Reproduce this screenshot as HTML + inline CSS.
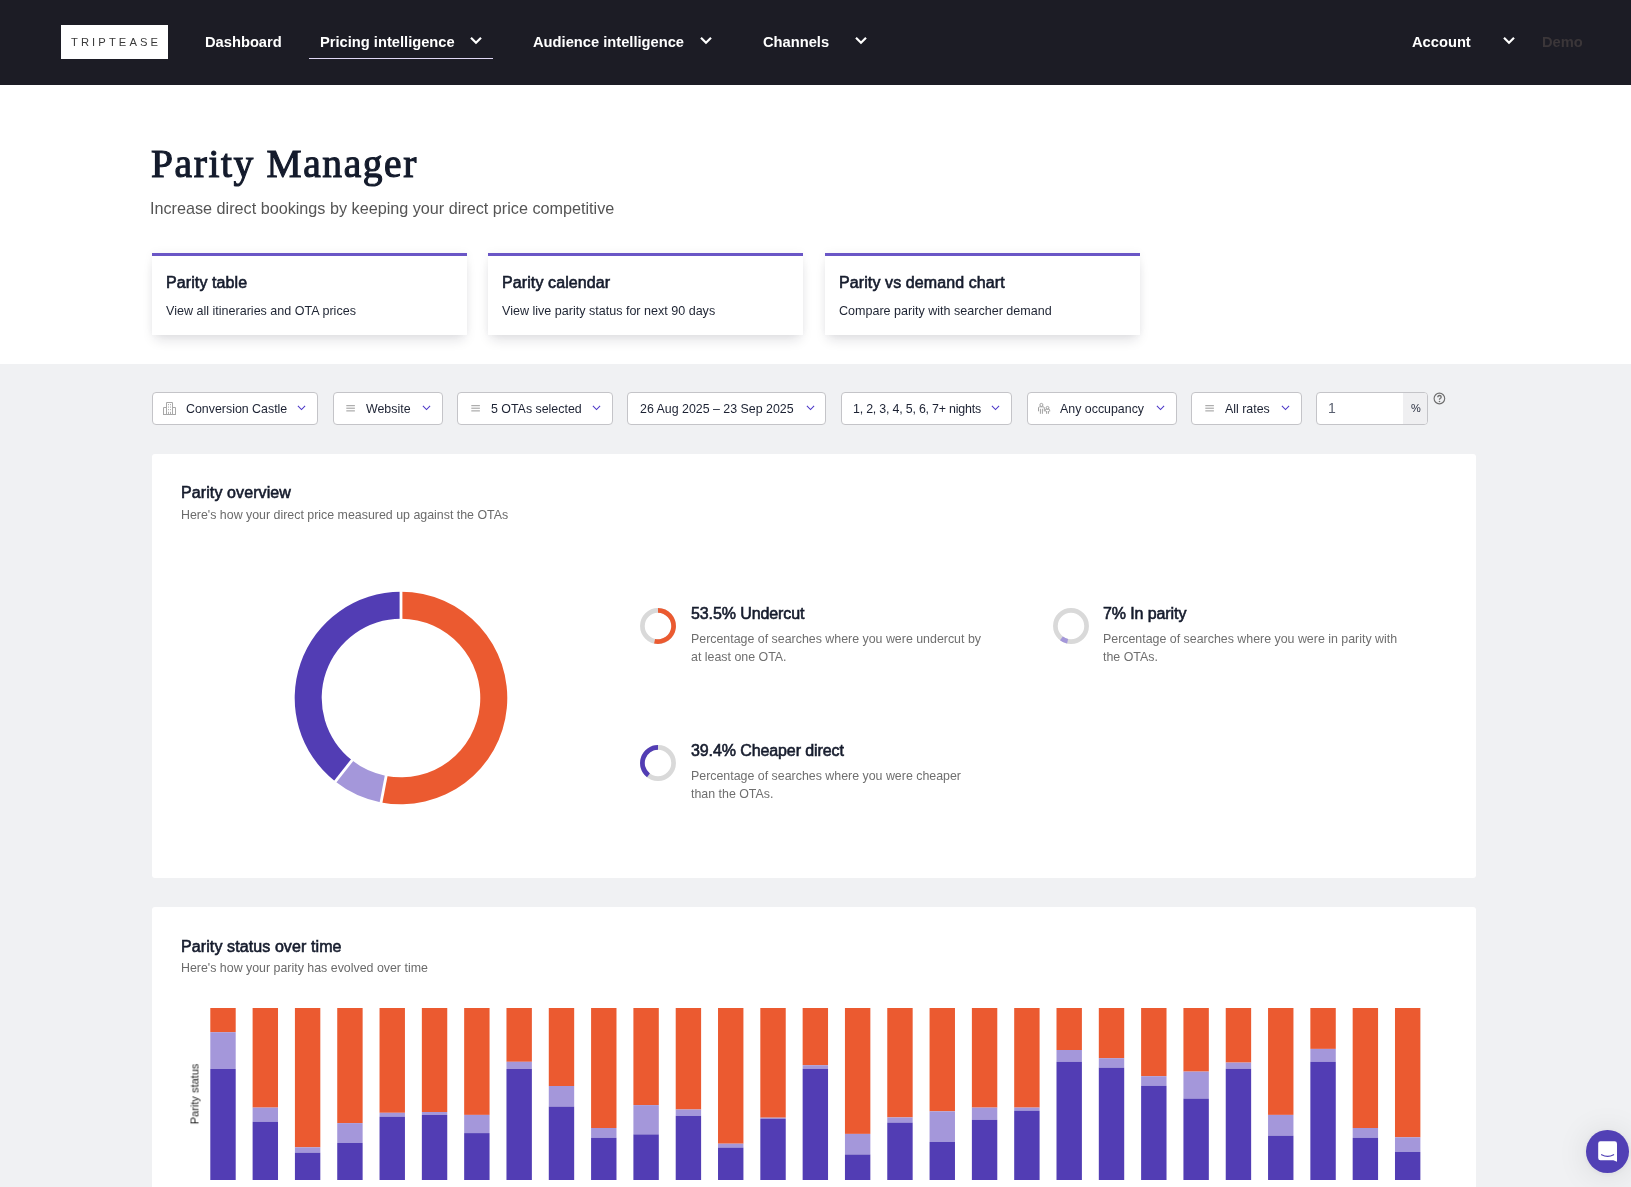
<!DOCTYPE html>
<html><head><meta charset="utf-8">
<style>
*{box-sizing:border-box;margin:0;padding:0}
html,body{width:1631px;height:1187px;overflow:hidden;background:#f0f1f3;font-family:"Liberation Sans",sans-serif;color:#161c2d}
.a{position:absolute;white-space:nowrap}
#nav{position:absolute;left:0;top:0;width:1631px;height:85px;background:#1c1c25}
.nv{position:absolute;top:34.5px;font-size:14.7px;line-height:14.7px;font-weight:700;color:#fff}
.chev{position:absolute;top:37px;width:12px;height:9px}
#hdr{position:absolute;left:0;top:85px;width:1631px;height:279px;background:#fff}
.hc{position:absolute;top:253px;width:315px;height:82px;background:#fff;border-top:3px solid #6a56c6;box-shadow:0 7px 12px -3px rgba(20,20,40,0.14),0 0 9px rgba(20,20,40,0.05)}
.hct{position:absolute;left:14px;top:19.3px;font-size:16px;line-height:16px;letter-spacing:0.1px;font-weight:400;-webkit-text-stroke:0.6px #161c2d;color:#161c2d;white-space:nowrap}
.hcd{position:absolute;left:14px;top:49.2px;font-size:12.55px;line-height:12.55px;color:#1e2433;white-space:nowrap}
.flt{position:absolute;top:392px;height:33px;background:#fff;border:1px solid #c4c4c8;border-radius:4px}
.ft{position:absolute;top:403.1px;font-size:12.4px;line-height:12.4px;color:#1c2233;white-space:nowrap}
.card{position:absolute;left:152px;width:1324px;background:#fff;border-radius:3px}
.ct{position:absolute;font-size:16px;line-height:16px;letter-spacing:0.1px;font-weight:400;-webkit-text-stroke:0.6px #161c2d;color:#161c2d;white-space:nowrap}
.cs{position:absolute;font-size:12.4px;line-height:12.4px;color:#6b6b6b;white-space:nowrap}
.st{position:absolute;font-size:16px;line-height:16px;letter-spacing:-0.1px;font-weight:400;-webkit-text-stroke:0.6px #161c2d;color:#161c2d;white-space:nowrap}
.sd{position:absolute;font-size:12.4px;line-height:18px;color:#6f6f6f;white-space:nowrap}
.a,.nv,.ft,.ct,.cs,.st,.sd,.hc{will-change:transform}
</style></head><body>
<div id="nav">
  <div class="a" style="left:61px;top:25px;width:107px;height:34px;background:#fff"></div>
  <div class="a" style="left:70.9px;top:36.5px;font-size:11.2px;line-height:11.2px;letter-spacing:3.1px;color:#3a3a3a">TRIPTEASE</div>
  <div class="nv" style="left:204.5px">Dashboard</div>
  <div class="nv" style="left:320.4px">Pricing intelligence</div>
  <svg class="chev" style="left:469.8px;top:36px" viewBox="0 0 12 9"><path d="M1 1.7 L6 6.7 L11 1.7" fill="none" stroke="#fff" stroke-width="2.2"/></svg>
  <div class="a" style="left:309px;top:58px;width:184px;height:1px;background:#e0d8f5"></div>
  <div class="nv" style="left:532.8px">Audience intelligence</div>
  <svg class="chev" style="left:699.8px;top:36px" viewBox="0 0 12 9"><path d="M1 1.7 L6 6.7 L11 1.7" fill="none" stroke="#fff" stroke-width="2.2"/></svg>
  <div class="nv" style="left:763.3px">Channels</div>
  <svg class="chev" style="left:854.8px;top:36px" viewBox="0 0 12 9"><path d="M1 1.7 L6 6.7 L11 1.7" fill="none" stroke="#fff" stroke-width="2.2"/></svg>
  <div class="nv" style="left:1412px">Account</div>
  <svg class="chev" style="left:1502.8px;top:36px" viewBox="0 0 12 9"><path d="M1 1.7 L6 6.7 L11 1.7" fill="none" stroke="#fff" stroke-width="2.2"/></svg>
  <div class="nv" style="left:1541.6px;color:#3b3639">Demo</div>
</div>
<div id="hdr"></div>
<div class="a" style="left:150.5px;top:144.6px;font-family:'Liberation Serif',serif;font-size:39.5px;line-height:39.5px;font-weight:400;-webkit-text-stroke:1.1px #141b2c;letter-spacing:1.6px;color:#141b2c">Parity Manager</div>
<div class="a" style="left:150px;top:199.8px;font-size:16.2px;line-height:16.2px;color:#555">Increase direct bookings by keeping your direct price competitive</div>

<div class="hc" style="left:152px"><div class="hct">Parity table</div><div class="hcd">View all itineraries and OTA prices</div></div>
<div class="hc" style="left:488px"><div class="hct">Parity calendar</div><div class="hcd">View live parity status for next 90 days</div></div>
<div class="hc" style="left:825px"><div class="hct">Parity vs demand chart</div><div class="hcd">Compare parity with searcher demand</div></div>

<!-- FILTERS -->
<div class="flt" style="left:152px;width:166px"></div>
<svg class="a" style="left:163px;top:402px" width="13" height="13" viewBox="0 0 13 13"><g fill="none" stroke="#a8a8a8" stroke-width="1"><path d="M3.5 12.5V0.5h6v12M0.5 12.5V5.5h3M9.5 5.5h3v7M0 12.5h13"/><path d="M5.5 2v1.2M7.5 2v1.2M5.5 4.5v1.2M7.5 4.5v1.2M5.5 7v1.2M7.5 7v1.2M5.5 9.8v2.7M7.5 9.8v2.7" stroke-width="0.9"/></g></svg>
<div class="ft" style="left:185.5px">Conversion Castle</div>
<svg class="a" style="left:297px;top:405px" width="9" height="6" viewBox="0 0 9 6"><path d="M0.9 0.9 L4.5 4.5 L8.1 0.9" fill="none" stroke="#4a36c8" stroke-width="1.05"/></svg>

<div class="flt" style="left:333px;width:110px"></div>
<svg class="a" style="left:345.8px;top:404px" width="10" height="8" viewBox="0 0 10 8"><path d="M0.3 1.7h8.6M0.3 4.2h8.6M0.3 6.9h8.6" fill="none" stroke="#9a9a9a" stroke-width="1"/></svg>
<div class="ft" style="left:366px">Website</div>
<svg class="a" style="left:422.3px;top:405px" width="9" height="6" viewBox="0 0 9 6"><path d="M0.9 0.9 L4.5 4.5 L8.1 0.9" fill="none" stroke="#4a36c8" stroke-width="1.05"/></svg>

<div class="flt" style="left:457px;width:155.5px"></div>
<svg class="a" style="left:470.8px;top:404px" width="10" height="8" viewBox="0 0 10 8"><path d="M0.3 1.7h8.6M0.3 4.2h8.6M0.3 6.9h8.6" fill="none" stroke="#9a9a9a" stroke-width="1"/></svg>
<div class="ft" style="left:491.1px">5 OTAs selected</div>
<svg class="a" style="left:592px;top:405px" width="9" height="6" viewBox="0 0 9 6"><path d="M0.9 0.9 L4.5 4.5 L8.1 0.9" fill="none" stroke="#4a36c8" stroke-width="1.05"/></svg>

<div class="flt" style="left:627px;width:198.6px"></div>
<div class="ft" style="left:639.6px">26 Aug 2025 – 23 Sep 2025</div>
<svg class="a" style="left:806px;top:405px" width="9" height="6" viewBox="0 0 9 6"><path d="M0.9 0.9 L4.5 4.5 L8.1 0.9" fill="none" stroke="#4a36c8" stroke-width="1.05"/></svg>

<div class="flt" style="left:841.3px;width:170.5px"></div>
<div class="ft" style="left:852.9px;letter-spacing:-0.2px">1, 2, 3, 4, 5, 6, 7+ nights</div>
<svg class="a" style="left:990.8px;top:405px" width="9" height="6" viewBox="0 0 9 6"><path d="M0.9 0.9 L4.5 4.5 L8.1 0.9" fill="none" stroke="#4a36c8" stroke-width="1.05"/></svg>

<div class="flt" style="left:1027.4px;width:149.3px"></div>
<svg class="a" style="left:1037px;top:402px" width="15" height="13" viewBox="0 0 15 13"><g fill="none" stroke="#a0a0a0" stroke-width="1"><circle cx="4.4" cy="2.9" r="1.5"/><path d="M1.5 9.3V5.9q0-1.1 1.1-1.1h3.6q1.1 0 1.1 1.1V9.3M3.4 6.8v5M5.4 6.8v5"/><circle cx="10.5" cy="5.8" r="1.4"/><path d="M8.3 9.5v-1.4q0-.9.9-.9h2.6q.9 0 .9.9v1.4M9.6 9v2.8M11.4 9v2.8"/></g></svg>
<div class="ft" style="left:1060.2px">Any occupancy</div>
<svg class="a" style="left:1156px;top:405px" width="9" height="6" viewBox="0 0 9 6"><path d="M0.9 0.9 L4.5 4.5 L8.1 0.9" fill="none" stroke="#4a36c8" stroke-width="1.05"/></svg>

<div class="flt" style="left:1191.3px;width:110.4px"></div>
<svg class="a" style="left:1205.2px;top:404px" width="10" height="8" viewBox="0 0 10 8"><path d="M0.3 1.7h8.6M0.3 4.2h8.6M0.3 6.9h8.6" fill="none" stroke="#9a9a9a" stroke-width="1"/></svg>
<div class="ft" style="left:1224.7px">All rates</div>
<svg class="a" style="left:1281.3px;top:405px" width="9" height="6" viewBox="0 0 9 6"><path d="M0.9 0.9 L4.5 4.5 L8.1 0.9" fill="none" stroke="#4a36c8" stroke-width="1.05"/></svg>

<div class="flt" style="left:1316.3px;width:112.2px;overflow:hidden"><div style="position:absolute;left:86px;top:0;width:25px;height:31px;background:#efeff1"></div></div>
<div class="ft" style="left:1328.3px;top:401.3px;color:#5a6070;font-size:14px;line-height:14px">1</div>
<div class="ft" style="left:1411px;font-size:11px;line-height:11px;top:403.2px;color:#2a3040">%</div>
<svg class="a" style="left:1433px;top:392px" width="13" height="13" viewBox="0 0 13 13"><circle cx="6.4" cy="6.5" r="5.3" fill="none" stroke="#6f6f6f" stroke-width="1.15"/><path d="M4.8 5.3q0-1.8 1.7-1.8t1.7 1.6q0 1-1.1 1.4-.6.3-.6 1v.3" fill="none" stroke="#6f6f6f" stroke-width="1.3"/><circle cx="6.5" cy="9.5" r=".8" fill="#6f6f6f"/></svg>

<!-- CARD 1 -->
<div class="card" style="top:454px;height:424px"></div>
<div class="ct" style="left:180.8px;top:485.2px">Parity overview</div>
<div class="cs" style="left:180.8px;top:509.2px">Here's how your direct price measured up against the OTAs</div>
<svg class="a" style="left:294px;top:591px" width="214" height="214" viewBox="0 0 214 214"><path d="M107.00 0.70A106.3 106.3 0 1 1 87.08 211.42L92.14 184.90A79.3 79.3 0 1 0 107.00 27.70Z" fill="#eb5a30"/><path d="M87.08 211.42A106.3 106.3 0 0 1 41.26 190.54L57.96 169.32A79.3 79.3 0 0 0 92.14 184.90Z" fill="#a497da"/><path d="M41.26 190.54A106.3 106.3 0 0 1 107.00 0.70L107.00 27.70A79.3 79.3 0 0 0 57.96 169.32Z" fill="#523db4"/><line x1="107.00" y1="29.00" x2="107.00" y2="-1.00" stroke="#fff" stroke-width="2.8"/><line x1="92.38" y1="183.62" x2="86.76" y2="213.09" stroke="#fff" stroke-width="2.8"/><line x1="58.76" y1="168.30" x2="40.21" y2="191.87" stroke="#fff" stroke-width="2.8"/></svg>
<svg class="a" style="left:638px;top:606px" width="40" height="40" viewBox="0 0 40 40"><circle cx="20" cy="20" r="15.6" fill="none" stroke="#d9d9d9" stroke-width="4.7"/><path d="M20.00 2.05A17.95 17.95 0 1 1 16.08 37.52L17.11 32.93A13.25 13.25 0 1 0 20.00 6.75Z" fill="#eb5a30"/></svg><svg class="a" style="left:1050.9px;top:606px" width="40" height="40" viewBox="0 0 40 40"><circle cx="20" cy="20" r="15.6" fill="none" stroke="#d9d9d9" stroke-width="4.7"/><path d="M16.08 37.52A17.95 17.95 0 0 1 9.00 34.18L11.88 30.47A13.25 13.25 0 0 0 17.11 32.93Z" fill="#a497da"/></svg><svg class="a" style="left:638px;top:742.7px" width="40" height="40" viewBox="0 0 40 40"><circle cx="20" cy="20" r="15.6" fill="none" stroke="#d9d9d9" stroke-width="4.7"/><path d="M9.00 34.18A17.95 17.95 0 0 1 20.00 2.05L20.00 6.75A13.25 13.25 0 0 0 11.88 30.47Z" fill="#523db4"/></svg>
<div class="st" style="left:690.8px;top:605.5px">53.5% Undercut</div>
<div class="sd" style="left:690.8px;top:630px">Percentage of searches where you were undercut by<br>at least one OTA.</div>
<div class="st" style="left:1103.4px;top:605.5px">7% In parity</div>
<div class="sd" style="left:1103.4px;top:630px">Percentage of searches where you were in parity with<br>the OTAs.</div>
<div class="st" style="left:690.8px;top:742.6px">39.4% Cheaper direct</div>
<div class="sd" style="left:690.8px;top:766.6px">Percentage of searches where you were cheaper<br>than the OTAs.</div>


<!-- CARD 2 -->
<div class="card" style="top:907px;height:400px"></div>
<div class="ct" style="left:180.8px;top:939.3px">Parity status over time</div>
<div class="cs" style="left:180.8px;top:962.3px">Here's how your parity has evolved over time</div>
<svg class="a" style="left:0;top:0" width="1631" height="1187" viewBox="0 0 1631 1187"><rect x="210.30" y="1008" width="25.4" height="24.20" fill="#eb5a30"/><rect x="210.30" y="1032.20" width="25.4" height="36.80" fill="#a497da"/><rect x="210.30" y="1069.00" width="25.4" height="111.00" fill="#523db4"/><rect x="252.61" y="1008" width="25.4" height="99.60" fill="#eb5a30"/><rect x="252.61" y="1107.60" width="25.4" height="14.20" fill="#a497da"/><rect x="252.61" y="1121.80" width="25.4" height="58.20" fill="#523db4"/><rect x="294.92" y="1008" width="25.4" height="139.30" fill="#eb5a30"/><rect x="294.92" y="1147.30" width="25.4" height="5.40" fill="#a497da"/><rect x="294.92" y="1152.70" width="25.4" height="27.30" fill="#523db4"/><rect x="337.23" y="1008" width="25.4" height="115.10" fill="#eb5a30"/><rect x="337.23" y="1123.10" width="25.4" height="19.80" fill="#a497da"/><rect x="337.23" y="1142.90" width="25.4" height="37.10" fill="#523db4"/><rect x="379.54" y="1008" width="25.4" height="104.80" fill="#eb5a30"/><rect x="379.54" y="1112.80" width="25.4" height="3.90" fill="#a497da"/><rect x="379.54" y="1116.70" width="25.4" height="63.30" fill="#523db4"/><rect x="421.85" y="1008" width="25.4" height="104.00" fill="#eb5a30"/><rect x="421.85" y="1112.00" width="25.4" height="2.90" fill="#a497da"/><rect x="421.85" y="1114.90" width="25.4" height="65.10" fill="#523db4"/><rect x="464.16" y="1008" width="25.4" height="106.90" fill="#eb5a30"/><rect x="464.16" y="1114.90" width="25.4" height="18.20" fill="#a497da"/><rect x="464.16" y="1133.10" width="25.4" height="46.90" fill="#523db4"/><rect x="506.47" y="1008" width="25.4" height="53.80" fill="#eb5a30"/><rect x="506.47" y="1061.80" width="25.4" height="7.20" fill="#a497da"/><rect x="506.47" y="1069.00" width="25.4" height="111.00" fill="#523db4"/><rect x="548.78" y="1008" width="25.4" height="78.00" fill="#eb5a30"/><rect x="548.78" y="1086.00" width="25.4" height="20.60" fill="#a497da"/><rect x="548.78" y="1106.60" width="25.4" height="73.40" fill="#523db4"/><rect x="591.09" y="1008" width="25.4" height="120.00" fill="#eb5a30"/><rect x="591.09" y="1128.00" width="25.4" height="9.80" fill="#a497da"/><rect x="591.09" y="1137.80" width="25.4" height="42.20" fill="#523db4"/><rect x="633.40" y="1008" width="25.4" height="97.10" fill="#eb5a30"/><rect x="633.40" y="1105.10" width="25.4" height="29.30" fill="#a497da"/><rect x="633.40" y="1134.40" width="25.4" height="45.60" fill="#523db4"/><rect x="675.71" y="1008" width="25.4" height="101.50" fill="#eb5a30"/><rect x="675.71" y="1109.50" width="25.4" height="6.40" fill="#a497da"/><rect x="675.71" y="1115.90" width="25.4" height="64.10" fill="#523db4"/><rect x="718.02" y="1008" width="25.4" height="135.70" fill="#eb5a30"/><rect x="718.02" y="1143.70" width="25.4" height="3.90" fill="#a497da"/><rect x="718.02" y="1147.60" width="25.4" height="32.40" fill="#523db4"/><rect x="760.33" y="1008" width="25.4" height="109.70" fill="#eb5a30"/><rect x="760.33" y="1117.70" width="25.4" height="1.00" fill="#a497da"/><rect x="760.33" y="1118.70" width="25.4" height="61.30" fill="#523db4"/><rect x="802.64" y="1008" width="25.4" height="57.20" fill="#eb5a30"/><rect x="802.64" y="1065.20" width="25.4" height="3.60" fill="#a497da"/><rect x="802.64" y="1068.80" width="25.4" height="111.20" fill="#523db4"/><rect x="844.95" y="1008" width="25.4" height="125.90" fill="#eb5a30"/><rect x="844.95" y="1133.90" width="25.4" height="20.60" fill="#a497da"/><rect x="844.95" y="1154.50" width="25.4" height="25.50" fill="#523db4"/><rect x="887.26" y="1008" width="25.4" height="109.40" fill="#eb5a30"/><rect x="887.26" y="1117.40" width="25.4" height="5.20" fill="#a497da"/><rect x="887.26" y="1122.60" width="25.4" height="57.40" fill="#523db4"/><rect x="929.57" y="1008" width="25.4" height="103.30" fill="#eb5a30"/><rect x="929.57" y="1111.30" width="25.4" height="30.60" fill="#a497da"/><rect x="929.57" y="1141.90" width="25.4" height="38.10" fill="#523db4"/><rect x="971.88" y="1008" width="25.4" height="99.60" fill="#eb5a30"/><rect x="971.88" y="1107.60" width="25.4" height="12.20" fill="#a497da"/><rect x="971.88" y="1119.80" width="25.4" height="60.20" fill="#523db4"/><rect x="1014.19" y="1008" width="25.4" height="99.60" fill="#eb5a30"/><rect x="1014.19" y="1107.60" width="25.4" height="3.10" fill="#a497da"/><rect x="1014.19" y="1110.70" width="25.4" height="69.30" fill="#523db4"/><rect x="1056.50" y="1008" width="25.4" height="42.00" fill="#eb5a30"/><rect x="1056.50" y="1050.00" width="25.4" height="11.80" fill="#a497da"/><rect x="1056.50" y="1061.80" width="25.4" height="118.20" fill="#523db4"/><rect x="1098.81" y="1008" width="25.4" height="50.20" fill="#eb5a30"/><rect x="1098.81" y="1058.20" width="25.4" height="9.50" fill="#a497da"/><rect x="1098.81" y="1067.70" width="25.4" height="112.30" fill="#523db4"/><rect x="1141.12" y="1008" width="25.4" height="68.20" fill="#eb5a30"/><rect x="1141.12" y="1076.20" width="25.4" height="9.60" fill="#a497da"/><rect x="1141.12" y="1085.80" width="25.4" height="94.20" fill="#523db4"/><rect x="1183.43" y="1008" width="25.4" height="63.60" fill="#eb5a30"/><rect x="1183.43" y="1071.60" width="25.4" height="27.00" fill="#a497da"/><rect x="1183.43" y="1098.60" width="25.4" height="81.40" fill="#523db4"/><rect x="1225.74" y="1008" width="25.4" height="54.60" fill="#eb5a30"/><rect x="1225.74" y="1062.60" width="25.4" height="6.20" fill="#a497da"/><rect x="1225.74" y="1068.80" width="25.4" height="111.20" fill="#523db4"/><rect x="1268.05" y="1008" width="25.4" height="106.90" fill="#eb5a30"/><rect x="1268.05" y="1114.90" width="25.4" height="20.80" fill="#a497da"/><rect x="1268.05" y="1135.70" width="25.4" height="44.30" fill="#523db4"/><rect x="1310.36" y="1008" width="25.4" height="40.90" fill="#eb5a30"/><rect x="1310.36" y="1048.90" width="25.4" height="12.90" fill="#a497da"/><rect x="1310.36" y="1061.80" width="25.4" height="118.20" fill="#523db4"/><rect x="1352.67" y="1008" width="25.4" height="120.00" fill="#eb5a30"/><rect x="1352.67" y="1128.00" width="25.4" height="9.80" fill="#a497da"/><rect x="1352.67" y="1137.80" width="25.4" height="42.20" fill="#523db4"/><rect x="1394.98" y="1008" width="25.4" height="129.30" fill="#eb5a30"/><rect x="1394.98" y="1137.30" width="25.4" height="14.60" fill="#a497da"/><rect x="1394.98" y="1151.90" width="25.4" height="28.10" fill="#523db4"/></svg><div class="a" style="left:195px;top:1094px;font-size:11px;line-height:11px;color:#222;transform:translate(-50%,-50%) rotate(-90deg)">Parity status</div>

<div class="a" style="left:1586.2px;top:1130px;width:42.6px;height:42.6px;border-radius:50%;background:#5140b5;box-shadow:0 1px 6px rgba(0,0,0,0.06),0 2px 32px rgba(0,0,0,0.10)"></div>
<svg class="a" style="left:1598px;top:1140.5px" width="20" height="22" viewBox="0 0 20 22"><path d="M2.4 0.3h14.2q2.4 0 2.4 2.4v18.1l-3.6-1.5H2.4q-2.2 0-2.2-2.2V2.6q0-2.3 2.2-2.3z" fill="#fff"/><path d="M3.6 13.7q6 3.4 12 0" fill="none" stroke="#5140b5" stroke-width="1.2" stroke-linecap="round"/></svg>
</body></html>
